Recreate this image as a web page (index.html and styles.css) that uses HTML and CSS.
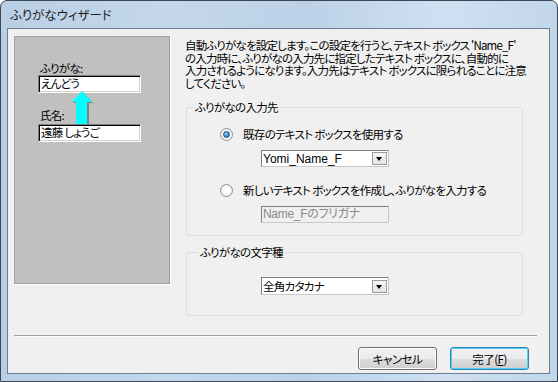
FILE: index.html
```html
<!DOCTYPE html>
<html lang="ja">
<head>
  <meta charset="UTF-8">
  <title>ふりがなウィザード</title>
  <link rel="stylesheet" href="styles.css">
</head>
<body>
  <div class="window">
    <div class="titlebar">ふりがなウィザード</div>
    <div class="client">
      <div class="main">
        <div class="picture">
          <div class="pic-label">ふりがな:</div>
          <div class="pic-box">えんどう</div>
          <div class="pic-row">
            <div class="pic-label pic-label-name">氏名:</div>
            <svg class="arrow" width="21" height="33" viewBox="0 0 21 33">
              <polygon points="11,1 21,12 17,12 17,33 6,33 6,12 1,12" fill="#808080"/>
              <polygon points="10,0 20,11 15,11 15,33 4,33 4,11 0,11" fill="#00ffff"/>
            </svg>
          </div>
          <div class="pic-box">遠藤 しょうご</div>
        </div>

        <div class="settings">
          <p class="intro">自動ふりがなを設定します。この設定を行うと、テキスト ボックス 'Name_F'<br>の入力時に、ふりがなの入力先に指定したテキスト ボックスに、自動的に<br>入力されるようになります。入力先はテキスト ボックスに限られることに注意<br>してください。</p>

          <fieldset class="group group-target">
            <legend>ふりがなの入力先</legend>
            <div class="group-body">
              <div class="option">
                <span class="radio checked"></span>
                <span>既存のテキスト ボックスを使用する</span>
              </div>
              <div class="combo combo-first">
                <span class="combo-text">Yomi_Name_F</span>
                <span class="combo-btn"></span>
              </div>
              <div class="option option-second">
                <span class="radio"></span>
                <span>新しいテキスト ボックスを作成し、ふりがなを入力する</span>
              </div>
              <div class="textbox disabled">Name_Fのフリガナ</div>
            </div>
          </fieldset>

          <fieldset class="group group-kind">
            <legend>ふりがなの文字種</legend>
            <div class="group-body">
              <div class="combo combo-kind">
                <span class="combo-text">全角カタカナ</span>
                <span class="combo-btn"></span>
              </div>
            </div>
          </fieldset>
        </div>
      </div>

      <div class="footer">
        <div class="separator"></div>
        <div class="buttons">
          <button class="btn">キャンセル</button>
          <button class="btn btn-default">完了(<u>F</u>)</button>
        </div>
      </div>
    </div>
  </div>
</body>
</html>
```

FILE: styles.css
```css
html, body {
  margin: 0;
  padding: 0;
  background-color: #ffffff;
  font-family: "Noto Sans CJK JP", "Liberation Sans", sans-serif;
  font-size: 11.5px;
  letter-spacing: -0.7px;
  font-feature-settings: "palt";
  color: #000000;
}

.window {
  width: 558px;
  height: 382px;
  box-sizing: border-box;
  border: 1px solid #3b4756;
  border-radius: 7px 7px 0 0;
  padding: 0 7px 7px 6px;
  display: flex;
  flex-direction: column;
  background: linear-gradient(90deg, #b9cfe6 0%, #c4d7eb 30%, #bcd1e8 55%, #cfe0f2 80%, #c2d6ea 100%);
}

.titlebar {
  height: 27px;
  line-height: 27px;
  padding-left: 3px;
  font-size: 12.5px;
  letter-spacing: 0;
  color: #1e1e1e;
}

.client {
  flex: 1;
  border: 1px solid #6d7e91;
  background-color: #f0f0f0;
  padding: 7px 12px 0 6px;
  display: flex;
  flex-direction: column;
}

.main {
  display: flex;
  align-items: flex-start;
}

/* picture panel on the left */
.picture {
  flex-shrink: 0;
  width: 156px;
  height: 248px;
  box-sizing: border-box;
  background-color: #c0c0c0;
  border: 1px solid #a0a0a0;
  box-shadow: 1px 1px 0 #ffffff;
  padding: 24px 0 0 23px;
}

.pic-label {
  height: 14px;
  line-height: 14px;
  padding-left: 2px;
}

.pic-box {
  width: 103px;
  height: 18px;
  box-sizing: border-box;
  background-color: #ffffff;
  border: 1px solid;
  border-color: #808080 #ffffff #ffffff #808080;
  box-shadow: inset 1px 1px 0 #000000, inset -1px -1px 0 #d4d0c8;
  padding-left: 2px;
  line-height: 15px;
}

.pic-row {
  height: 31px;
  display: flex;
  align-items: flex-end;
}

.pic-label-name {
  width: 32px;
  padding-bottom: 2px;
}

.arrow {
  display: block;
}

/* right side */
.settings {
  margin-left: 15px;
  padding-top: 3px;
}

.intro {
  margin: 0;
  line-height: 12.5px;
  letter-spacing: -0.8px;
  white-space: nowrap;
}

.group {
  margin: 11px 0 0 1px;
  padding: 0;
  width: 337px;
  box-sizing: border-box;
  border: 1px solid #d5dfe5;
  border-radius: 3px;
}

.group legend {
  margin-left: 6px;
  padding: 0 2px;
  line-height: 14px;
}

.group-target {
  height: 136px;
}

.group-kind {
  margin-top: 9px;
  height: 71px;
}

.group-kind legend {
  margin-left: 11px;
}

.group-body {
  padding-left: 33px;
}

.option {
  margin-top: 13px;
  height: 14px;
  display: flex;
  align-items: center;
  gap: 10px;
  line-height: 14px;
  white-space: nowrap;
}

.option-second {
  margin-top: 16px;
}

.radio {
  flex-shrink: 0;
  width: 13px;
  height: 13px;
  box-sizing: border-box;
  border-radius: 50%;
  border: 1px solid #8e8f8f;
  background: radial-gradient(circle at 50% 50%, #ffffff 30%, #e6e6e6 100%);
  position: relative;
}

.radio.checked::after {
  content: "";
  position: absolute;
  left: 2px;
  top: 2px;
  width: 7px;
  height: 7px;
  box-sizing: border-box;
  border-radius: 50%;
  border: 1px solid #1b4f7d;
  background: radial-gradient(circle at 40% 35%, #a8dcfa 0%, #3b96d4 50%, #1a5e99 100%);
}

.combo {
  margin-left: 41px;
  width: 128px;
  height: 17px;
  box-sizing: border-box;
  border: 1px solid;
  border-color: #808080 #c8c8c8 #c8c8c8 #808080;
  background-color: #ffffff;
  display: flex;
  align-items: center;
  justify-content: space-between;
}

.combo-first {
  margin-top: 9px;
}

.combo-kind {
  margin-top: 18px;
  height: 18px;
}

.combo-text {
  padding-left: 1px;
  line-height: 14px;
  font-family: "Liberation Sans", "Noto Sans CJK JP", sans-serif;
  font-size: 12px;
  letter-spacing: 0;
}

.combo-kind .combo-text {
  font-family: "Noto Sans CJK JP", sans-serif;
  font-size: 11.5px;
  letter-spacing: -0.7px;
}

.combo-btn {
  width: 15px;
  height: 13px;
  margin-right: 1px;
  box-sizing: border-box;
  border: 1px solid #9c9c9c;
  background: linear-gradient(#f6f6f6, #e4e4e4);
  position: relative;
}

.combo-btn::after {
  content: "";
  position: absolute;
  left: 3px;
  top: 4px;
  border-left: 3.5px solid transparent;
  border-right: 3.5px solid transparent;
  border-top: 4px solid #000000;
}

.textbox {
  margin: 9px 0 0 41px;
  width: 128px;
  height: 17px;
  box-sizing: border-box;
  border: 1px solid;
  border-color: #808080 #c8c8c8 #c8c8c8 #808080;
  padding-left: 1px;
  line-height: 14px;
  font-family: "Liberation Sans", "Noto Sans CJK JP", sans-serif;
  font-size: 12px;
  letter-spacing: -0.3px;
}

.textbox.disabled {
  background-color: #f0f0f0;
  color: #8a8a8a;
}

/* footer */
.footer {
  margin-top: 19px;
}

.separator {
  border-top: 1px solid #a0a0a0;
  border-bottom: 1px solid #ffffff;
}

.buttons {
  margin-top: 10px;
  padding-right: 8px;
  display: flex;
  justify-content: flex-end;
  gap: 13px;
}

.btn {
  width: 79px;
  height: 23px;
  padding: 0;
  border: 1px solid #707070;
  border-radius: 3px;
  background: linear-gradient(#f2f2f2 0%, #ebebeb 50%, #dddddd 51%, #cfcfcf 100%);
  box-shadow: inset 0 0 0 1px #fcfcfc;
  font-family: "Noto Sans CJK JP", sans-serif;
  font-size: 11.5px;
  letter-spacing: -0.5px;
  font-feature-settings: "palt";
  color: #000000;
}

.btn-default {
  border-color: #3c7fb1;
  box-shadow: inset 0 0 0 1px #48d4fe;
}
```
